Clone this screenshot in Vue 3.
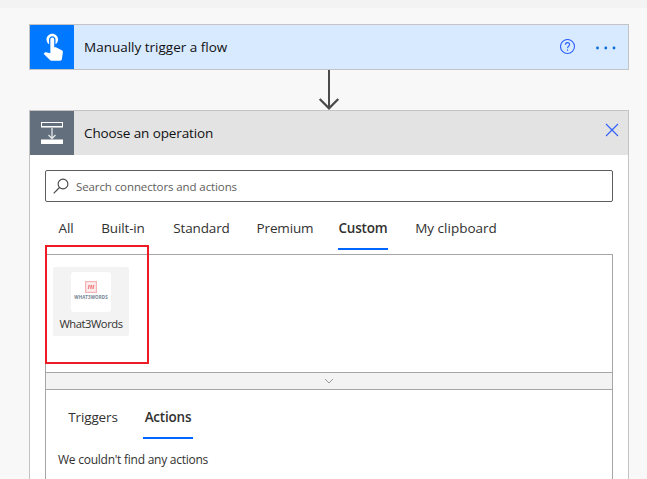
<script setup>
import { ref } from 'vue'

const categories = ['All', 'Built-in', 'Standard', 'Premium', 'Custom', 'My clipboard']
const kinds = ['Triggers', 'Actions']
const category = ref('Custom')
const kind = ref('Actions')
</script>

<template>
  <main class="designer">
    <div class="topbar"></div>

    <section class="card trigger">
      <div class="badge">
        <svg width="44" height="44" viewBox="0 0 44 44">
          <path
            transform="translate(7.500 4.800) scale(1.286)"
            d="M9 11.240V7.500C9 6.120 10.120 5 11.500 5S14 6.120 14 7.500v3.740c1.210-.81 2-2.180 2-3.740C16 5.010 13.990 3 11.500 3S7 5.010 7 7.500c0 1.560.79 2.930 2 3.740zm9.840 4.630l-4.540-2.260c-.17-.07-.35-.11-.54-.11H13v-6c0-.83-.67-1.500-1.500-1.500S10 6.670 10 7.500v10.740l-3.430-.72c-.08-.01-.15-.03-.24-.03-.31 0-.59.13-.79.33l-.79.8 4.940 4.940c.27.27.65.44 1.060.44h6.790c.75 0 1.330-.55 1.440-1.280l.75-5.270c.01-.07.02-.14.02-.2 0-.62-.38-1.160-.91-1.380z"
            fill="#fff"
          />
        </svg>
      </div>
      <h2 class="title title-trigger">Manually trigger a flow</h2>
      <svg class="help" width="16" height="16" viewBox="0 0 16 16" fill="none" stroke="#2f5fff">
        <circle cx="7.500" cy="7.500" r="7" stroke-width="1.100" />
        <path d="M5.400 5.700c0-1.300.9-2.100 2.100-2.100s2.100.8 2.100 2c0 1.600-2.100 1.800-2.100 3.700" stroke-width="1.100" />
        <path d="M7.500 10.500v1.300" stroke-width="1.200" />
      </svg>
      <svg class="more" width="22" height="4" viewBox="0 0 22 4" fill="#0b6cdc">
        <circle cx="2.500" cy="2" r="1.400" />
        <circle cx="10.800" cy="2" r="1.400" />
        <circle cx="19" cy="2" r="1.400" />
      </svg>
    </section>

    <svg class="connector" width="22" height="40" viewBox="0 0 22 40" fill="none" stroke="#4b4b4b" stroke-width="2">
      <path d="M11 0v38" />
      <path d="M1.700 29l9.300 9.300 9.300-9.300" stroke-width="2.300" />
    </svg>

    <section class="card operation">
      <header class="head">
        <div class="badge">
          <svg width="44" height="44" viewBox="0 0 44 44">
            <path d="M11 15h22v2H11zM11 28h22v1H11z" fill="#b4bac0" />
            <path d="M11 11h22v5H11zM12 12v3h20v-3z" fill="#fff" fill-rule="evenodd" />
            <path d="M22 17v10.500M18.500 24l3.500 3.500 3.500-3.500" fill="none" stroke="#e4e8eb" stroke-width="1.300" />
            <path d="M11 29h22v4H11z" fill="#fff" />
          </svg>
        </div>
        <h2 class="title title-operation">Choose an operation</h2>
        <svg class="close" width="14" height="14" viewBox="0 0 14 14" fill="none" stroke="#2f5fff" stroke-width="1.100">
          <path d="M1 1l12 12M13 1L1 13" />
        </svg>
      </header>

      <div class="body">
        <div class="search">
          <svg width="16" height="16" viewBox="0 0 16 16" fill="none" stroke="#444" stroke-width="1.100">
            <circle cx="10" cy="6" r="4.900" />
            <path d="M6.500 9.500L.7 15.300" />
          </svg>
          <span>Search connectors and actions</span>
        </div>

        <nav class="tabs categories">
          <a v-for="c in categories" :key="c" :class="{ active: c === category }" @click="category = c"><span>{{ c }}</span></a>
        </nav>

        <div class="connectors">
          <div class="tile">
            <div class="logo">
              <svg width="12" height="12" viewBox="0 0 12 12">
                <rect x=".6" y=".6" width="10.800" height="10.800" fill="#fdeeee" stroke="#f6b3b6" stroke-width="1.200" />
                <path d="M4.300 3.900L3.300 8M6.600 3.900L5.600 8M8.900 3.900L7.900 8" stroke="#ea6870" stroke-width="1.100" />
                <path d="M3.500 4l-.2 4M5.900 4l-.3 4M8.200 4l-.3 4" stroke="#f0969b" stroke-width=".7" />
              </svg>
              <span class="wordmark">WHAT3WORDS</span>
            </div>
            <span class="name">What3Words</span>
          </div>
          <div class="callout"></div>
        </div>

        <div class="collapse">
          <svg width="10" height="6" viewBox="0 0 10 6" fill="none" stroke="#9a9a9a">
            <path d="M1 1l4 4 4-4" />
          </svg>
        </div>

        <div class="results">
          <nav class="tabs kinds">
            <a v-for="k in kinds" :key="k" :class="{ active: k === kind }" @click="kind = k"><span>{{ k }}</span></a>
          </nav>
          <p class="empty">We couldn't find any actions</p>
        </div>
      </div>
    </section>
  </main>
</template>

<style>
body {
  margin: 0;
  background: #f8f8f8;
}
</style>

<style scoped>
.designer,
.designer * {
  box-sizing: border-box;
}
.designer {
  height: 479px;
  overflow: hidden;
  background: #f8f8f8;
  font-family: 'Open Sans', 'Noto Sans', sans-serif;
  color: #323130;
  display: flex;
  flex-direction: column;
}
.topbar {
  height: 8px;
  flex: none;
  background: #f3f3f3;
  margin-bottom: 16px;
}
.card {
  width: 600px;
  margin-left: 29px;
  border: 1px solid #c4c4c4;
  flex: none;
}
.trigger {
  height: 46px;
  background: #d8eaff;
  display: flex;
  align-items: center;
}
.badge {
  width: 44px;
  height: 44px;
  flex: none;
  background: #0078ff;
}
.badge svg {
  display: block;
}
.title {
  margin: 0 auto 0 10px;
  font-size: 13.5px;
  line-height: 20px;
  font-weight: 400;
  color: #111;
  white-space: nowrap;
}
.title-trigger {
  letter-spacing: 0;
}
.title-operation {
  letter-spacing: -0.12px;
}
.help {
  margin-right: 19px;
}
.more {
  margin-right: 11px;
  margin-top: 1px;
}
.connector {
  display: block;
  flex: none;
  margin-left: 318px;
}
.operation {
  height: 400px;
  background: #fff;
}
.head {
  height: 44px;
  background: #e3e3e3;
  display: flex;
  align-items: center;
}
.head .badge {
  background: #636f7c;
}
.close {
  margin-right: 9px;
  margin-bottom: 6px;
}
.body {
  padding: 15px 15px 0;
}
.search {
  height: 32px;
  border: 1px solid #5d5c5b;
  border-radius: 2px;
  display: flex;
  align-items: center;
  gap: 7px;
  padding-left: 7px;
  font-size: 11.5px;
  letter-spacing: -0.1px;
  color: #605e5c;
  white-space: nowrap;
}
.tabs {
  display: grid;
  font-size: 13.5px;
  white-space: nowrap;
}
.tabs a {
  display: flex;
  justify-content: center;
  border-bottom: 2px solid transparent;
  line-height: 20px;
  letter-spacing: -0.15px;
  cursor: pointer;
}
.tabs a.active {
  font-weight: 600;
  letter-spacing: -0.2px;
  border-color: #0066ff;
}
.categories {
  height: 48px;
  padding-left: 12px;
  grid-template-columns: 18px 44px 61px 54px 50px 84px;
  column-gap: 26px;
}
.categories a {
  padding-top: 16px;
}
.categories a:last-child {
  letter-spacing: 0;
}
.connectors {
  position: relative;
  height: 119px;
  margin-top: 4px;
  border: 1px solid #a6a6a6;
  padding: 12px 7px;
}
.tile {
  width: 76px;
  height: 69px;
  border-radius: 2px;
  background: #f3f3f3;
  display: flex;
  flex-direction: column;
  align-items: center;
  padding-top: 5px;
}
.logo {
  width: 40px;
  height: 40px;
  border-radius: 3px;
  background: #fff;
  display: flex;
  flex-direction: column;
  align-items: center;
  padding-top: 9px;
}
.wordmark {
  margin-top: 1px;
  font-size: 4.4px;
  line-height: 7px;
  font-weight: 700;
  color: #708090;
  letter-spacing: 0.15px;
}
.name {
  margin-top: 3px;
  font-size: 11.2px;
  line-height: 18px;
  letter-spacing: -0.45px;
  white-space: nowrap;
}
.callout {
  position: absolute;
  left: -1px;
  top: -10px;
  width: 104px;
  height: 119px;
  border: 2px solid #ed1c24;
}
.collapse {
  height: 16px;
  background: #f3f3f3;
  border: solid #a6a6a6;
  border-width: 0 1px;
  display: flex;
  align-items: center;
  justify-content: center;
}
.results {
  height: 140px;
  border: 1px solid #a6a6a6;
}
.kinds {
  height: 49px;
  padding-left: 22px;
  grid-template-columns: 50px 50px;
  column-gap: 25px;
}
.kinds a {
  padding-top: 17px;
}
.empty {
  margin: 12px 0 0 12px;
  font-size: 12px;
  line-height: 18px;
  letter-spacing: -0.25px;
}
</style>
